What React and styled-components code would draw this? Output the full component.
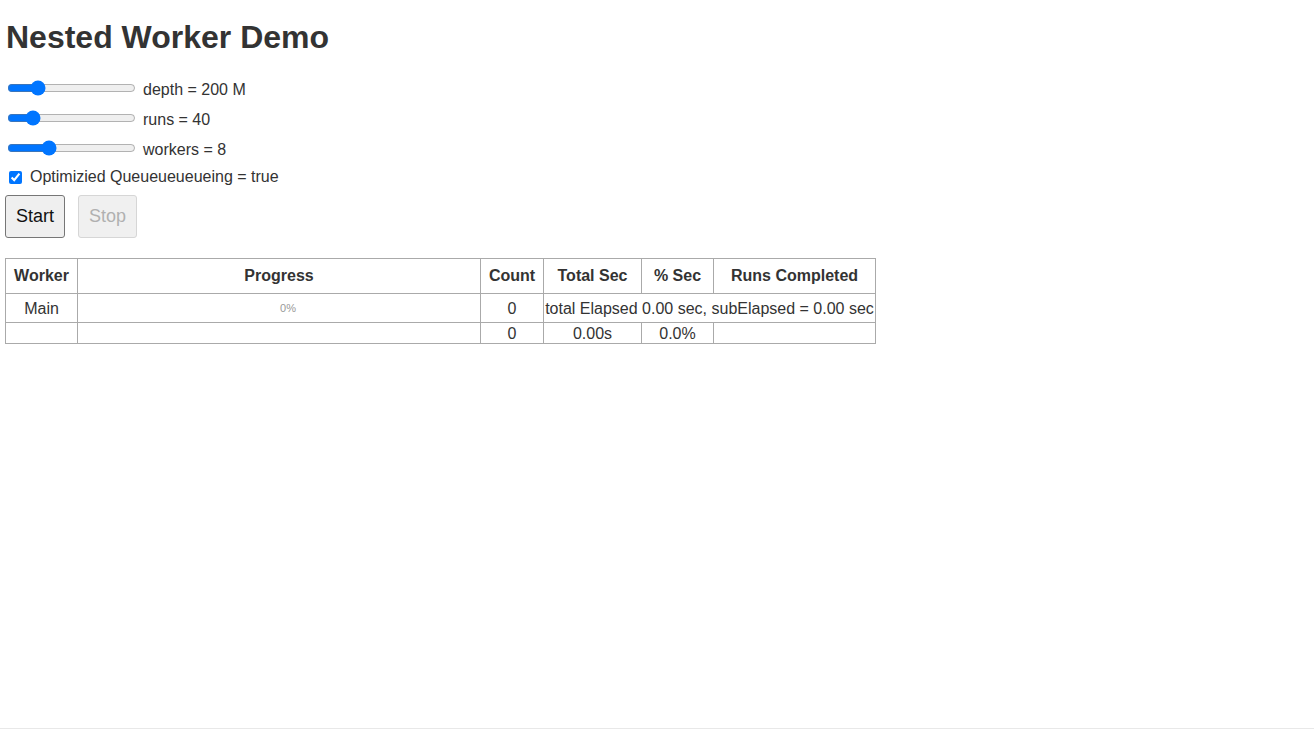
import React, { useState } from 'react';
import styled, { createGlobalStyle } from 'styled-components';

const GlobalStyle = createGlobalStyle`
  html, body {
    margin: 0;
    padding: 0;
    background: #fff;
  }
  body {
    font-family: "Liberation Sans", Arial, sans-serif;
    color: #333;
  }
`;

const Page = styled.div`
  box-sizing: border-box;
  min-height: 100vh;
  padding: 5px;
  border-bottom: 1px solid #e8e8e8;
`;

const Title = styled.h1`
  margin: 14px 0 18px 1px;
  font-size: 32px;
  line-height: 36px;
  font-weight: 700;
`;

const SliderRow = styled.label`
  display: flex;
  align-items: center;
  height: 30px;
  font-size: 16px;
`;

const Range = styled.input`
  width: 129px;
  margin: 2px 7px 2px 2px;
`;

const RangeText = styled.span`
  padding-top: 4px;
`;

const CheckRow = styled.label`
  display: flex;
  align-items: center;
  height: 28px;
  font-size: 16px;
`;

const Check = styled.input`
  margin: 3px 8px 3px 4px;
`;

const Buttons = styled.div`
  display: flex;
  gap: 13px;
  margin-top: 4px;
`;

const Button = styled.button`
  font-family: "Liberation Sans", Arial, sans-serif;
  font-size: 18px;
  line-height: 21px;
  padding: 10px 10px;
  border: 1px solid #767676;
  border-radius: 3px;
  background: #efefef;
  color: #111;

  &:disabled {
    border-color: #d6d6d6;
    background: #f0f0f0;
    color: #b0b0b0;
  }
`;

const Table = styled.table`
  margin-top: 20px;
  border-collapse: collapse;
  font-size: 16px;
  color: #333;
`;

const Th = styled.th`
  border: 1px solid #aaa;
  padding: 8px 1px;
  line-height: 18px;
  width: ${p => p.$w}px;
`;

const Td = styled.td`
  border: 1px solid #aaa;
  padding: 1px 0 0;
  line-height: 19px;
  text-align: center;
  white-space: nowrap;
`;

const Progress = styled.div`
  height: 27px;
  display: flex;
  align-items: center;
  justify-content: center;
  padding-left: 18px;
  font-size: 11px;
  color: #999;
`;

const columns = [
  ['Worker', 69],
  ['Progress', 400],
  ['Count', 60],
  ['Total Sec', 95],
  ['% Sec', 69],
  ['Runs Completed', 159],
];

export default function App() {
  const [depth, setDepth] = useState(20);
  const [runs, setRuns] = useState(16);
  const [workers, setWorkers] = useState(30);
  const [optimized, setOptimized] = useState(true);

  return (
    <Page>
      <GlobalStyle />
      <Title>Nested Worker Demo</Title>
      <SliderRow>
        <Range type="range" min="0" max="100" value={depth} onChange={e => setDepth(+e.target.value)} />
        <RangeText>depth = 200 M</RangeText>
      </SliderRow>
      <SliderRow>
        <Range type="range" min="0" max="100" value={runs} onChange={e => setRuns(+e.target.value)} />
        <RangeText>runs = 40</RangeText>
      </SliderRow>
      <SliderRow>
        <Range type="range" min="0" max="100" value={workers} onChange={e => setWorkers(+e.target.value)} />
        <RangeText>workers = 8</RangeText>
      </SliderRow>
      <CheckRow>
        <Check type="checkbox" checked={optimized} onChange={e => setOptimized(e.target.checked)} />
        Optimizied Queueueueueing = {String(optimized)}
      </CheckRow>
      <Buttons>
        <Button>Start</Button>
        <Button disabled>Stop</Button>
      </Buttons>
      <Table>
        <thead>
          <tr>
            {columns.map(([name, w]) => (
              <Th key={name} $w={w}>{name}</Th>
            ))}
          </tr>
        </thead>
        <tbody>
          <tr>
            <Td>Main</Td>
            <Td><Progress>0%</Progress></Td>
            <Td>0</Td>
            <Td colSpan={3}>total Elapsed 0.00 sec, subElapsed = 0.00 sec</Td>
          </tr>
          <tr>
            <Td></Td>
            <Td></Td>
            <Td>0</Td>
            <Td>0.00s</Td>
            <Td>0.0%</Td>
            <Td></Td>
          </tr>
        </tbody>
      </Table>
    </Page>
  );
}
